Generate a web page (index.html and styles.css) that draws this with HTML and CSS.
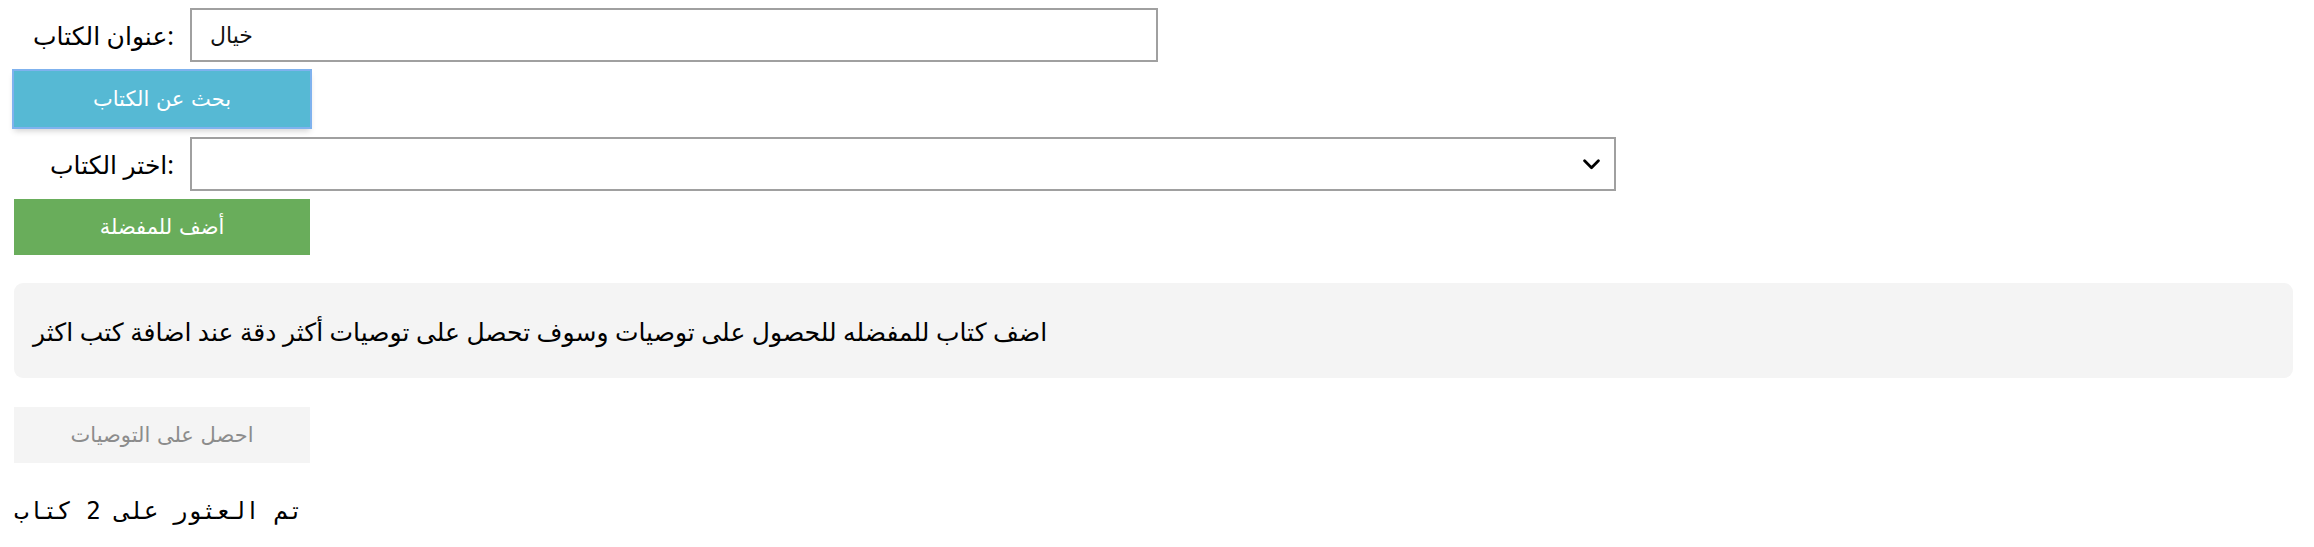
FILE: index.html
```html
<!DOCTYPE html>
<html lang="ar">
<head>
<meta charset="utf-8">
<title>توصيات الكتب</title>
<link rel="stylesheet" href="styles.css">
</head>
<body>
<div class="page">
  <div class="field-row">
    <label class="field-label" for="title">عنوان الكتاب:</label>
    <input class="text-input" id="title" type="text" value="خيال" dir="rtl">
  </div>
  <button class="btn btn-search" type="button">بحث عن الكتاب</button>

  <div class="field-row field-row-select">
    <label class="field-label" for="book">اختر الكتاب:</label>
    <div class="select-box" id="book">
      <svg class="chevron" viewBox="0 0 16 10" width="17" height="11" aria-hidden="true">
        <path d="M1.5 1.5 L8 8 L14.5 1.5" fill="none" stroke="#000" stroke-width="2.6" stroke-linecap="round" stroke-linejoin="round"/>
      </svg>
    </div>
  </div>
  <button class="btn btn-fav" type="button">أضف للمفضلة</button>

  <div class="info-box">
    <p class="info-text">اضف كتاب للمفضله للحصول على توصيات وسوف تحصل على توصيات أكثر دقة عند اضافة كتب اكثر</p>
  </div>

  <button class="btn btn-disabled" type="button" disabled>احصل على التوصيات</button>

  <pre class="result">تم العثور على 2 كتاب</pre>
</div>
</body>
</html>
```
FILE: styles.css
```css
html, body {
  margin: 0;
  padding: 0;
  background: #ffffff;
}

body {
  font-family: "Noto Sans", "DejaVu Sans", sans-serif;
  color: #000;
}

.page {
  padding: 8px 21px 0 14px;
  display: flex;
  flex-direction: column;
  align-items: flex-start;
}

.field-row {
  display: grid;
  grid-template-columns: 160px auto;
  column-gap: 16px;
  align-items: center;
}

.field-label {
  font-size: 25px;
  text-align: right;
  white-space: nowrap;
}

.text-input {
  box-sizing: border-box;
  width: 968px;
  height: 54px;
  border: 2px solid #a0a0a0;
  padding: 0 18px;
  font-family: "DejaVu Sans", sans-serif;
  font-size: 22px;
  color: #111;
  text-align: left;
  outline: none;
  background: #fff;
}

.select-box {
  box-sizing: border-box;
  width: 1426px;
  height: 54px;
  border: 2px solid #a0a0a0;
  background: #fff;
  display: flex;
  align-items: center;
  justify-content: flex-end;
  padding-right: 14px;
}

.chevron {
  display: block;
}

.btn {
  box-sizing: border-box;
  width: 296px;
  height: 56px;
  border: none;
  font-family: "DejaVu Sans", sans-serif;
  font-size: 21px;
  color: #fff;
  padding: 0;
  cursor: pointer;
}

.btn-search {
  margin-top: 9px;
  background: #56b9d4;
  outline: 2px solid #7fb2ee;
  box-shadow: 0 4px 6px rgba(0, 0, 0, 0.18);
}

.field-row-select {
  margin-top: 10px;
}

.btn-fav {
  margin-top: 8px;
  background: #69ad5b;
}

.info-box {
  box-sizing: border-box;
  align-self: stretch;
  margin-top: 28px;
  height: 95px;
  background: #f4f4f4;
  border-radius: 9px;
  padding: 0 19px;
  display: flex;
  align-items: center;
}

.info-text {
  margin: 0;
  font-size: 25px;
}

.btn-disabled {
  margin-top: 29px;
  background: #f4f4f4;
  color: #8c8c8c;
  font-size: 21px;
  cursor: default;
}

.result {
  margin: 34px 0 0 0;
  font-family: "DejaVu Sans Mono", monospace;
  font-size: 24px;
}
```
